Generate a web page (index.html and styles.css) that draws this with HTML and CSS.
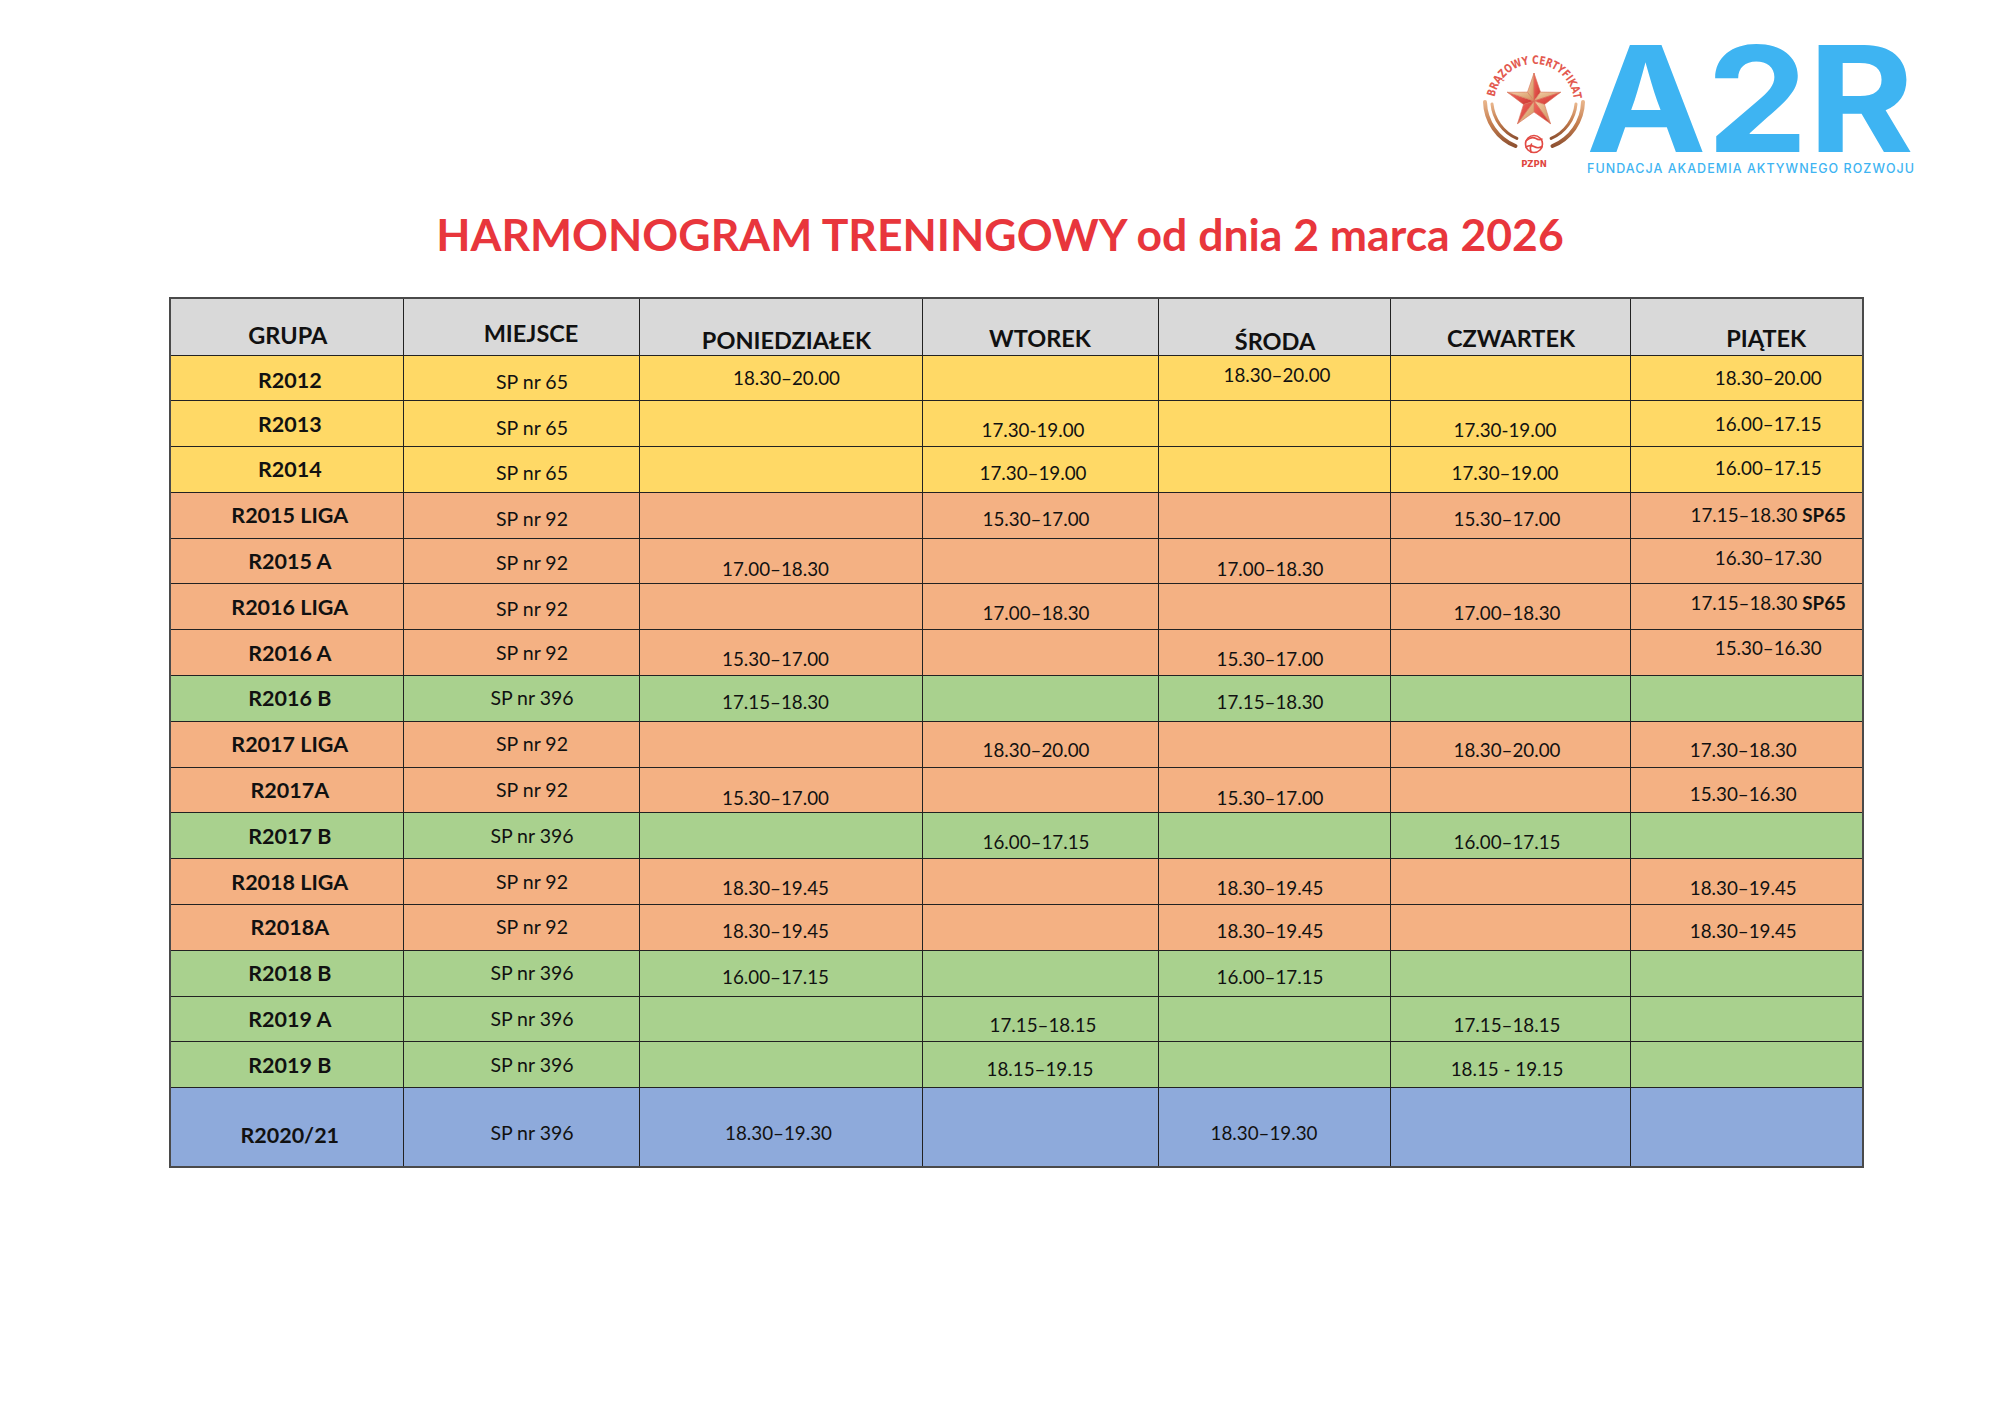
FILE: index.html
```html
<!DOCTYPE html>
<html lang="pl">
<head>
<meta charset="utf-8">
<title>Harmonogram treningowy</title>
<link rel="stylesheet" href="styles.css">
</head>
<body>
<div class="page">
  <header class="masthead">
    <div class="logo">
      <svg class="badge" viewBox="0 0 100 130" xmlns="http://www.w3.org/2000/svg">
        <defs>
          <linearGradient id="bronze" x1="0" y1="0" x2="0" y2="1">
            <stop offset="0" stop-color="#e8b48a"/>
            <stop offset="0.5" stop-color="#c47d4e"/>
            <stop offset="1" stop-color="#8f5232"/>
          </linearGradient>
          <linearGradient id="gold" x1="0" y1="0" x2="1" y2="1">
            <stop offset="0" stop-color="#f4d0a8"/>
            <stop offset="1" stop-color="#cf8f5a"/>
          </linearGradient>
          <linearGradient id="red" x1="0" y1="0" x2="1" y2="1">
            <stop offset="0" stop-color="#f26a60"/>
            <stop offset="1" stop-color="#cc3530"/>
          </linearGradient>
          <path id="arcText" d="M10.6 52 A40 40 0 0 1 89.4 52"/>
        </defs>
        <text class="badge-arc"><textPath href="#arcText" textLength="114" lengthAdjust="spacingAndGlyphs">BRĄZOWY CERTYFIKAT</textPath></text>
        <path class="arc" d="M1 57 A49 49 0 0 0 31.5 101"/>
        <path class="arc thin" d="M8 59 A42 42 0 0 0 32.9 93.4"/>
        <path class="arc" d="M99 57 A49 49 0 0 1 68.5 101"/>
        <path class="arc thin" d="M92 59 A42 42 0 0 1 67.1 93.4"/>
        <g class="star" stroke-linejoin="round">
          <polygon fill="url(#gold)" points="50,56 43.5,47.1 50,28"/>
          <polygon fill="url(#red)" points="50,56 50,28 56.5,47.1"/>
          <polygon fill="url(#gold)" points="50,56 56.5,47.1 76.6,47.3"/>
          <polygon fill="url(#red)" points="50,56 76.6,47.3 60.5,59.4"/>
          <polygon fill="url(#gold)" points="50,56 60.5,59.4 66.5,78.7"/>
          <polygon fill="url(#red)" points="50,56 66.5,78.7 50,67"/>
          <polygon fill="url(#gold)" points="50,56 50,67 33.5,78.7"/>
          <polygon fill="url(#red)" points="50,56 33.5,78.7 39.5,59.4"/>
          <polygon fill="url(#red)" points="50,56 39.5,59.4 23.4,47.3"/>
          <polygon fill="url(#gold)" points="50,56 23.4,47.3 43.5,47.1"/>
        </g>
        <g class="ball">
          <circle cx="50" cy="99" r="8.5"/>
          <path d="M42.5 95.5 Q47 91 52 93.5 Q55 95.5 58 94"/>
          <path d="M42 102 Q46 99.5 50 101.5 Q54 104 58 101.5"/>
          <path d="M47 107 Q45.5 103 47.5 99"/>
        </g>
        <text class="badge-pzpn" x="50" y="122">PZPN</text>
      </svg>
      <svg class="wordmark" viewBox="0 0 330 130" xmlns="http://www.w3.org/2000/svg">
        <text class="wm-main" x="0" y="107" textLength="328" lengthAdjust="spacingAndGlyphs">A2R</text>
        <text class="wm-sub" x="1" y="128" textLength="327" lengthAdjust="spacing">FUNDACJA AKADEMIA AKTYWNEGO ROZWOJU</text>
      </svg>
    </div>
  </header>

  <h1 class="title">HARMONOGRAM TRENINGOWY od dnia 2 marca 2026</h1>

  <table class="sched">
    <colgroup>
      <col class="c-grp"><col class="c-loc"><col class="c-mon"><col class="c-tue"><col class="c-wed"><col class="c-thu"><col class="c-fri">
    </colgroup>
    <thead>
      <tr>
        <th class="hd-grupa">GRUPA</th>
        <th class="hd-miejsce">MIEJSCE</th>
        <th class="hd-pon">PONIEDZIAŁEK</th>
        <th class="hd-wt">WTOREK</th>
        <th class="hd-sr">ŚRODA</th>
        <th class="hd-czw">CZWARTEK</th>
        <th class="hd-pt">PIĄTEK</th>
      </tr>
    </thead>
    <tbody>
      <tr class="row yellow">
        <td class="dn2">R2012</td><td class="dn4">SP nr 65</td><td class="sr6">18.30–20.00</td><td></td><td class="up3 sr3">18.30–20.00</td><td></td><td class="fr">18.30–20.00</td>
      </tr>
      <tr class="row yellow">
        <td>R2013</td><td class="dn4">SP nr 65</td><td></td><td class="dn6 sl7">17.30-19.00</td><td></td><td class="dn6 sl5">17.30-19.00</td><td class="fr">16.00–17.15</td>
      </tr>
      <tr class="row yellow">
        <td>R2014</td><td class="dn4">SP nr 65</td><td></td><td class="dn4 sl7">17.30–19.00</td><td></td><td class="dn4 sl5">17.30–19.00</td><td class="fr up1">16.00–17.15</td>
      </tr>
      <tr class="row orange">
        <td>R2015 LIGA</td><td class="dn4">SP nr 92</td><td></td><td class="dn4">15.30–17.00</td><td></td><td class="dn4">15.30–17.00</td><td class="fr">17.15–18.30 <strong>SP65</strong></td>
      </tr>
      <tr class="row orange">
        <td>R2015 A</td><td class="dn2">SP nr 92</td><td class="dn8">17.00–18.30</td><td></td><td class="dn8">17.00–18.30</td><td></td><td class="fr up3">16.30–17.30</td>
      </tr>
      <tr class="row orange">
        <td>R2016 LIGA</td><td class="dn2">SP nr 92</td><td></td><td class="dn6">17.00–18.30</td><td></td><td class="dn6">17.00–18.30</td><td class="fr up4">17.15–18.30 <strong>SP65</strong></td>
      </tr>
      <tr class="row orange">
        <td>R2016 A</td><td>SP nr 92</td><td class="dn6">15.30–17.00</td><td></td><td class="dn6">15.30–17.00</td><td></td><td class="fr up5">15.30–16.30</td>
      </tr>
      <tr class="row green">
        <td>R2016 B</td><td>SP nr 396</td><td class="dn4">17.15–18.30</td><td></td><td class="dn4">17.15–18.30</td><td></td><td></td>
      </tr>
      <tr class="row orange">
        <td>R2017 LIGA</td><td>SP nr 92</td><td></td><td class="dn6">18.30–20.00</td><td></td><td class="dn6">18.30–20.00</td><td class="dn6">17.30–18.30</td>
      </tr>
      <tr class="row orange">
        <td>R2017A</td><td>SP nr 92</td><td class="dn8">15.30–17.00</td><td></td><td class="dn8">15.30–17.00</td><td></td><td class="dn4">15.30–16.30</td>
      </tr>
      <tr class="row green">
        <td>R2017 B</td><td>SP nr 396</td><td></td><td class="dn6">16.00–17.15</td><td></td><td class="dn6">16.00–17.15</td><td></td>
      </tr>
      <tr class="row orange">
        <td>R2018 LIGA</td><td>SP nr 92</td><td class="dn6">18.30–19.45</td><td></td><td class="dn6">18.30–19.45</td><td></td><td class="dn6">18.30–19.45</td>
      </tr>
      <tr class="row orange">
        <td>R2018A</td><td>SP nr 92</td><td class="dn4">18.30–19.45</td><td></td><td class="dn4">18.30–19.45</td><td></td><td class="dn4">18.30–19.45</td>
      </tr>
      <tr class="row green">
        <td>R2018 B</td><td>SP nr 396</td><td class="dn4">16.00–17.15</td><td></td><td class="dn4">16.00–17.15</td><td></td><td></td>
      </tr>
      <tr class="row green">
        <td>R2019 A</td><td>SP nr 396</td><td></td><td class="dn6 sr3">17.15–18.15</td><td></td><td class="dn6">17.15–18.15</td><td></td>
      </tr>
      <tr class="row green">
        <td>R2019 B</td><td>SP nr 396</td><td></td><td class="dn4 c0">18.15–19.15</td><td></td><td class="dn4">18.15 - 19.15</td><td></td>
      </tr>
      <tr class="row tall blue">
        <td class="dn8">R2020/21</td><td class="dn6">SP nr 396</td><td class="dn6 sl2">18.30–19.30</td><td></td><td class="dn6 sl10">18.30–19.30</td><td></td><td></td>
      </tr>
    </tbody>
  </table>
</div>
</body>
</html>
```

FILE: styles.css
```css
* {
  box-sizing: border-box;
}

html,
body {
  margin: 0;
  padding: 0;
  background: #ffffff;
}

body {
  width: 2000px;
  height: 1414px;
  overflow: hidden;
  font-family: Lato, "Open Sans", "DejaVu Sans", sans-serif;
  color: #111111;
}

/* ---------- masthead / logo ---------- */

.masthead {
  display: flex;
  justify-content: flex-end;
  padding: 45px 84px 0 0;
}

.logo {
  display: flex;
  align-items: flex-start;
  gap: 2px;
}

.badge {
  display: block;
  width: 100px;
  height: 130px;
  overflow: visible;
}

.wordmark {
  display: block;
  width: 330px;
  height: 130px;
  overflow: visible;
}

.badge-arc {
  font-family: "DejaVu Sans Condensed", "DejaVu Sans", sans-serif;
  font-weight: 700;
  font-size: 11.5px;
  fill: #e35a50;
}

.badge-pzpn {
  font-family: "DejaVu Sans", sans-serif;
  font-weight: 700;
  font-size: 8.5px;
  fill: #e0463f;
  text-anchor: middle;
}

.arc {
  fill: none;
  stroke: url(#bronze);
  stroke-width: 4;
  stroke-linecap: round;
}

.arc.thin {
  stroke-width: 3;
}

.star polygon {
  stroke-width: 0.6;
  stroke: #d9745a;
}

.ball circle,
.ball path {
  fill: none;
  stroke: #e24a44;
  stroke-width: 1.6;
  stroke-linecap: round;
}

.wm-main {
  font-family: Inter, Roboto, "DejaVu Sans", sans-serif;
  font-weight: 700;
  font-size: 147px;
  fill: #3eb4f2;
}

.wm-sub {
  font-family: Inter, Roboto, "DejaVu Sans", sans-serif;
  font-weight: 500;
  font-size: 12.5px;
  fill: #3eb4f2;
}

/* ---------- title ---------- */

.title {
  margin: 32px 0 0;
  text-align: center;
  font-size: 44.5px;
  line-height: 53px;
  font-weight: 700;
  color: #e8363c;
}

/* ---------- schedule table ---------- */

.sched {
  margin: 37px 0 0 169px;
  width: 1693px;
  table-layout: fixed;
  border-collapse: collapse;
  border: 2px solid #4a4a4a;
}

.c-grp { width: 233px; }
.c-loc { width: 236px; }
.c-mon { width: 283px; }
.c-tue { width: 236px; }
.c-wed { width: 232px; }
.c-thu { width: 240px; }
.c-fri { width: 233px; }

.sched thead tr {
  height: 57px;
  background: #d9d9d9;
}

.sched th {
  border: 1px solid #222222;
  padding: 0;
  font-size: 23.5px;
  line-height: 24px;
  font-weight: 700;
  text-align: center;
  vertical-align: middle;
  white-space: nowrap;
}

.sched .hd-grupa   { padding-top: 17px; padding-left: 2px; }
.sched .hd-miejsce { padding-top: 12px; padding-left: 20px; }
.sched .hd-pon     { padding-top: 26px; padding-left: 12px; }
.sched .hd-wt      { padding-top: 22px; }
.sched .hd-sr      { padding-top: 29px; padding-left: 2px; }
.sched .hd-czw     { padding-top: 23px; padding-left: 2px; }
.sched .hd-pt      { padding-top: 23px; padding-left: 40px; }

.sched .row {
  height: 45.8px;
}

.sched .row.tall {
  height: 79px;
}

.yellow { background: #ffd966; }
.orange { background: #f4b183; }
.green  { background: #a9d18e; }
.blue   { background: #8eaadb; }

.sched td {
  border: 1px solid #222222;
  padding: 0;
  font-size: 18.8px;
  line-height: 22px;
  text-align: center;
  vertical-align: middle;
  white-space: nowrap;
}

.sched td:nth-child(1) {
  font-weight: 700;
  font-size: 21.5px;
  padding-left: 6px;
}

.sched td:nth-child(2) {
  font-size: 19.5px;
  padding-left: 22px;
}

.sched td:nth-child(3) { padding-right: 10px; }
.sched td:nth-child(4) { padding-right: 8px; }
.sched td:nth-child(5) { padding-right: 8px; }
.sched td:nth-child(6) { padding-right: 6px; }
.sched td:nth-child(7) { padding-right: 6px; }

.sched td strong {
  font-weight: 700;
}

/* horizontal nudges */
.sched td.fr   { padding-left: 44px; padding-right: 0; }
.sched td.sr6  { padding-left: 12px; padding-right: 0; }
.sched td.sr3  { padding-left: 6px;  padding-right: 0; }
.sched td.c0   { padding-left: 0;    padding-right: 0; }
.sched td.sl2  { padding-left: 0;    padding-right: 4px; }
.sched td.sl5  { padding-left: 0;    padding-right: 10px; }
.sched td.sl7  { padding-left: 0;    padding-right: 14px; }
.sched td.sl10 { padding-left: 0;    padding-right: 20px; }

/* vertical nudges */
.sched td.dn2 { padding-top: 4px; }
.sched td.dn4 { padding-top: 8px; }
.sched td.dn6 { padding-top: 12px; }
.sched td.dn8 { padding-top: 15px; }
.sched td.up1 { padding-bottom: 2px; }
.sched td.up3 { padding-bottom: 6px; }
.sched td.up4 { padding-bottom: 8px; }
.sched td.up5 { padding-bottom: 10px; }
```
